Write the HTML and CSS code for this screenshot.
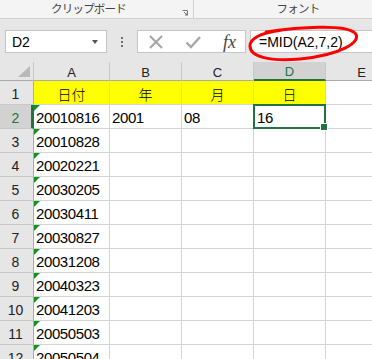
FILE: index.html
```html
<!DOCTYPE html>
<html lang="ja">
<head>
<meta charset="utf-8">
<link rel="stylesheet" href="styles.css">
</head>
<body>
<div class="app">
  <div class="ribbon">
    <div class="grp grp-clip"><span class="grp-label">クリップボード</span><span class="launcher"><svg width="6" height="6" viewBox="0 0 6 6"><path d="M0.5 0.5H5.5V5.5" fill="none" stroke="#777" stroke-width="1"/><path d="M2 2L5 5M3 5H5V3" fill="none" stroke="#777" stroke-width="1"/></svg></span></div>
    <div class="grp grp-font"><span class="grp-label">フォント</span></div>
  </div>
  <div class="fbar">
    <div class="namebox"><span class="nb-text">D2</span><span class="nb-dd"></span></div>
    <div class="dots"><i></i><i></i><i></i></div>
    <div class="fbtns">
      <svg class="ic" width="16" height="16" viewBox="0 0 16 16"><path d="M2 2L14 14M14 2L2 14" stroke="#a8a8a8" stroke-width="2.2" fill="none"/></svg>
      <svg class="ic" width="16" height="16" viewBox="0 0 16 16"><path d="M1.5 8.5L6 13L15 3" stroke="#a8a8a8" stroke-width="2.4" fill="none"/></svg>
      <span class="fx">fx</span>
    </div>
    <div class="finput">=MID(A2,7,2)</div>
  </div>
  <div class="sheet">
    <div class="grid">
      <div class="corner"><svg width="12" height="11" viewBox="0 0 12 11"><polygon points="12,0 12,11 0,11" fill="#b9b9b9"/></svg></div>
      <div class="ch">A</div><div class="ch">B</div><div class="ch">C</div><div class="ch ch-sel">D</div><div class="ch">E</div>

      <div class="rh">1</div><div class="c hd">日付</div><div class="c hd">年</div><div class="c hd">月</div><div class="c hd">日</div><div class="c"></div>
      <div class="rh rh-sel">2</div><div class="c err">20010816</div><div class="c">2001</div><div class="c">08</div><div class="c sel">16</div><div class="c"></div>
      <div class="rh">3</div><div class="c err">20010828</div><div class="c"></div><div class="c"></div><div class="c"></div><div class="c"></div>
      <div class="rh">4</div><div class="c err">20020221</div><div class="c"></div><div class="c"></div><div class="c"></div><div class="c"></div>
      <div class="rh">5</div><div class="c err">20030205</div><div class="c"></div><div class="c"></div><div class="c"></div><div class="c"></div>
      <div class="rh">6</div><div class="c err">20030411</div><div class="c"></div><div class="c"></div><div class="c"></div><div class="c"></div>
      <div class="rh">7</div><div class="c err">20030827</div><div class="c"></div><div class="c"></div><div class="c"></div><div class="c"></div>
      <div class="rh">8</div><div class="c err">20031208</div><div class="c"></div><div class="c"></div><div class="c"></div><div class="c"></div>
      <div class="rh">9</div><div class="c err">20040323</div><div class="c"></div><div class="c"></div><div class="c"></div><div class="c"></div>
      <div class="rh">10</div><div class="c err">20041203</div><div class="c"></div><div class="c"></div><div class="c"></div><div class="c"></div>
      <div class="rh">11</div><div class="c err">20050503</div><div class="c"></div><div class="c"></div><div class="c"></div><div class="c"></div>
      <div class="rh">12</div><div class="c err">20050504</div><div class="c"></div><div class="c"></div><div class="c"></div><div class="c"></div>
    </div>
  </div>
  <svg class="circle" width="130" height="45" viewBox="240 22 130 45"><path d="M266 32 C300 27, 345 24, 355 33 C363 42, 340 55, 300 59 C268 62, 250 56, 250 46 C250 39, 260 33, 282 30" fill="none" stroke="#ff0000" stroke-width="3" stroke-linecap="round"/></svg>
</div>
</body>
</html>
```

FILE: styles.css
```css
* { box-sizing: border-box; }
html, body { margin: 0; padding: 0; }
body { width: 372px; height: 359px; overflow: hidden; background: #fff; font-family: "Liberation Sans", Arial, sans-serif; }

.app { position: relative; width: 372px; height: 359px; overflow: hidden; display: flex; flex-direction: column; }

.ribbon { height: 19px; flex: none; background: #f4f4f4; border-bottom: 1px solid #d2d2d2; display: flex; }
.grp { height: 18px; display: flex; align-items: center; font-family: "Noto Sans CJK JP", sans-serif; font-size: 11.5px; color: #444; position: relative; }
.grp-clip { width: 194px; border-right: 1px solid #d2d2d2; justify-content: center; padding-right: 16px; }
.grp-font { flex: 1; justify-content: center; padding-left: 30px; }
.grp-label { letter-spacing: -0.8px; line-height: 1; }
.launcher { position: absolute; left: 182px; top: 10px; width: 6px; height: 6px; display: flex; }

.fbar { height: 43px; flex: none; background: #e6e6e6; display: flex; align-items: flex-start; padding-top: 11px; padding-left: 5px; }
.namebox { width: 102px; height: 23px; background: #fff; border: 1px solid #c6c6c6; display: flex; align-items: center; justify-content: space-between; padding: 0 8px 0 6px; }
.nb-text { font-size: 14px; color: #000; }
.nb-dd { width: 0; height: 0; border-left: 3px solid transparent; border-right: 3px solid transparent; border-top: 4px solid #555; }
.dots { width: 30px; height: 23px; display: flex; flex-direction: column; align-items: center; justify-content: center; gap: 2px; }
.dots i { display: block; width: 2px; height: 2px; background: #707070; }
.fbtns { width: 109px; height: 23px; background: #fff; border: 1px solid #c6c6c6; display: flex; align-items: center; padding-left: 10px; gap: 21px; }
.ic { flex: none; }
.fx { font-family: "Liberation Serif", "Times New Roman", serif; font-style: italic; font-size: 18px; color: #444; margin-left: 1px; line-height: 1; }
.finput { flex: 1; margin-left: 4px; height: 23px; background: #fff; border: 1px solid #c6c6c6; border-right: none; display: flex; align-items: center; padding-left: 8px; font-size: 14px; color: #000; }

.sheet { flex: 1; overflow: hidden; background: #fff; }
.grid { display: grid; grid-template-columns: 34px 76px 72px 72px 72px 72px; grid-template-rows: 19px repeat(12, 24px); width: 398px; }

.corner { background: #e6e6e6; border-right: 1px solid #c8c8c8; border-bottom: 1px solid #ababab; display: flex; align-items: flex-end; justify-content: flex-end; padding: 0 3px 3px 0; }
.ch { background: #e6e6e6; border-right: 1px solid #c8c8c8; border-bottom: 1px solid #ababab; display: flex; align-items: center; justify-content: center; font-size: 13px; color: #222; padding-top: 2px; }
.ch-sel { background: #d2d2d2; color: #217346; border-bottom: 2px solid #217346; }

.rh { background: #e6e6e6; border-right: 1px solid #ababab; border-bottom: 1px solid #c8c8c8; display: flex; align-items: flex-end; justify-content: center; font-size: 14px; color: #222; padding-bottom: 2px; padding-right: 2px; }
.rh-sel { background: #d2d2d2; color: #217346; border-right: 3px solid #217346; padding-right: 0; }

.c { position: relative; border-right: 1px solid #d4d4d4; border-bottom: 1px solid #d4d4d4; display: flex; align-items: flex-end; padding: 0 0 2px 2px; font-size: 15px; letter-spacing: -0.4px; color: #000; white-space: nowrap; }
.hd { background: #ffff00; justify-content: center; padding: 0 0 3px 0; font-family: "Noto Sans CJK JP", sans-serif; font-size: 14px; font-weight: 300; letter-spacing: 0; line-height: 1; }
.err::before { content: ""; position: absolute; left: 0; top: 0; width: 0; height: 0; border-top: 6px solid #14901e; border-right: 6px solid transparent; }
.sel { padding-left: 3px; }
.sel::after { content: ""; position: absolute; left: -1px; top: -1px; right: -1px; bottom: -1px; border: 2px solid #217346; }
.sel::before { content: ""; position: absolute; right: -3px; bottom: -3px; width: 6px; height: 6px; background: #217346; border: 1px solid #fff; z-index: 2; }

.circle { position: absolute; left: 240px; top: 22px; overflow: visible; }
```
